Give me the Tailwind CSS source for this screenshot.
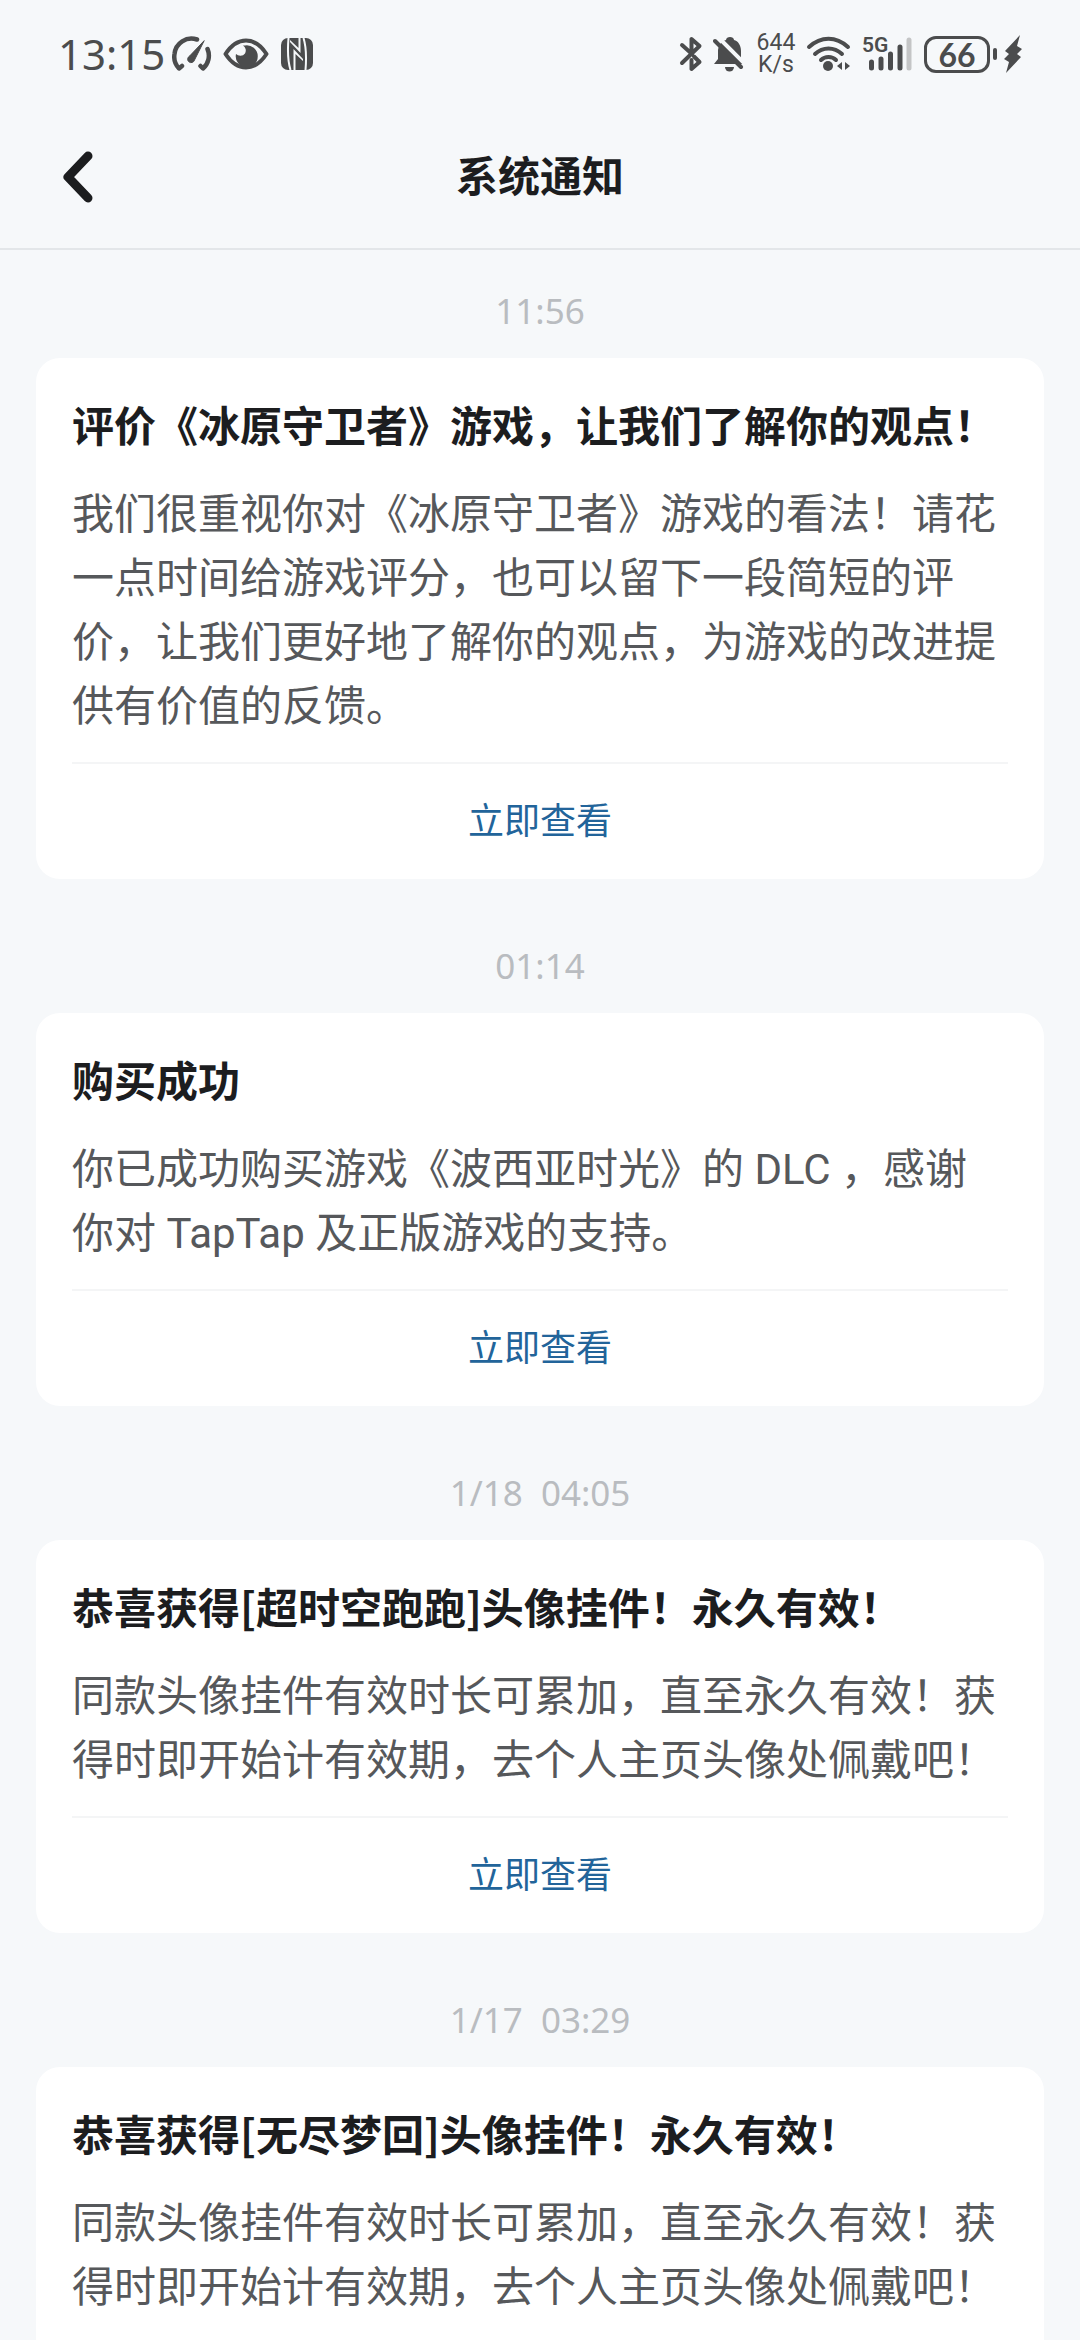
<!DOCTYPE html>
<html lang="zh-CN">
<head>
  <meta charset="UTF-8" />
  <meta name="viewport" content="width=device-width, initial-scale=1.0" />
  <title>系统通知</title>
  <script src="https://cdn.jsdelivr.net/npm/@tailwindcss/browser@4"></script>
</head>
<body class="h-screen flex flex-col bg-[#f6f8fa] text-[#1c1d1f] font-['Noto_Sans_CJK_SC',sans-serif]">

  <!-- 状态栏 -->
  <div class="h-[108px] shrink-0 flex items-center justify-between px-[58px] text-[#4b4c4d] font-['Noto_Sans',sans-serif]">
    <div class="flex items-center">
      <span class="text-[42px] leading-[44px]">13:15</span>
      <svg class="ml-[7px] w-[40px] h-[36px]" viewBox="0 0 40 36" fill="none" stroke="currentColor" stroke-width="4.5" stroke-linecap="round" stroke-linejoin="round">
        <path d="M10 30L7 32.500A17 17 0 0 1 2.500 18A17 17 0 0 1 25 3.500" />
        <path d="M35.500 13A17 17 0 0 1 31 32.500L28.500 30" />
        <path d="M32 5L22.500 24a3.500 3.500 0 1 1-5-4z" fill="currentColor" stroke-width="1" />
      </svg>
      <svg class="ml-[11px] w-[46px] h-[32px]" viewBox="0 0 46 32" fill="none" stroke="currentColor" stroke-width="4">
        <path d="M2.500 16C9 6 16 2.500 23 2.500S37 6 43.500 16C37 26 30 29.500 23 29.500S9 26 2.500 16z" stroke-linejoin="round" />
        <path d="M22 7.500a11 11 0 1 1-9 8.500 6 6 0 0 0 9-.500 6 6 0 0 0-2-8z" fill="currentColor" stroke="none" />
      </svg>
      <svg class="ml-[12px] w-[32px] h-[32px]" viewBox="0 0 32 32">
        <rect width="32" height="32" rx="7" fill="currentColor" />
        <path d="M7.500 0C6.500 12 7 24 9.500 32M24.500 32C25.500 20 25 8 22.500 0" fill="none" stroke="#f6f8fa" stroke-width="2" />
        <path d="M12.500 32V11L22 21V23L14.500 16V32zM19.500 0V15L9 4V2L17.500 10V0z" fill="#f6f8fa" />
      </svg>
    </div>

    <div class="flex items-center">
      <svg class="w-[24px] h-[36px]" viewBox="0 0 24 36" fill="none" stroke="currentColor" stroke-width="4" stroke-linejoin="round" stroke-linecap="round">
        <path d="M3 9L13 18M3 27L20.500 10L12.500 3V15M15 20.500L20.500 26L12.500 33V24" />
      </svg>
      <svg class="ml-[10px] w-[32px] h-[36px]" viewBox="0 0 32 36">
        <path d="M1 28L5 23V14C6 8 9 5 13 4C13 0 21 0 21 4C25 5 28 9 28 15V24L30 28z" fill="currentColor" />
        <path d="M12 31h9a4.500 4.500 0 0 1-9 0z" fill="currentColor" />
        <path d="M4 0L34 30" stroke="#f6f8fa" stroke-width="4" />
        <path d="M2 5L28 31" stroke="currentColor" stroke-width="4" stroke-linecap="round" />
      </svg>
      <div class="ml-[11px] w-[40px] flex flex-col items-center text-[23px] leading-[22px] font-['Roboto',sans-serif]">
        <span>644</span>
        <span>K/s</span>
      </div>
      <svg class="ml-[10px] w-[46px] h-[36px]" viewBox="0 0 46 36" fill="none" stroke="currentColor" stroke-width="4" stroke-linecap="round">
        <path d="M3 11C15 0 30 0 42 11M9 18C17 10.500 28 10.500 36 18M15 24C19 20 26 20 30 24" />
        <circle cx="22" cy="30" r="5" fill="currentColor" stroke="none" />
        <path d="M36 26v8l-5-4zM39 26v8l5-4z" fill="currentColor" stroke="none" />
      </svg>
      <div class="relative ml-[10px] w-[50px] h-[36px]">
        <span class="absolute left-0 top-0 text-[21px] leading-[18px] font-semibold font-['Roboto',sans-serif]">5G</span>
        <svg class="w-[50px] h-[36px]" viewBox="0 0 50 36" fill="none" stroke="currentColor" stroke-width="5" stroke-linecap="round">
          <path d="M9.500 26V32M19 23V32M28.500 18V32M38 11V32" />
          <path d="M47 4V32" stroke="#c4c5c6" />
        </svg>
      </div>
      <div class="ml-[12px] w-[66px] h-[37px] rounded-[12px] border-[3px] border-current flex items-center justify-center text-[32px] leading-[31px] font-bold font-['Lato',sans-serif]">66</div>
      <div class="ml-[3px] w-[4px] h-[12px] rounded-full bg-current"></div>
      <svg class="ml-[7px] w-[18px] h-[38px]" viewBox="0 0 18 38" fill="currentColor">
        <path d="M16 0L1 16L5 19L0 24L5 27L2 38L17 22L13 19L18 14L13 11z" />
      </svg>
    </div>
  </div>

  <header class="h-[142px] shrink-0 grid grid-cols-3 items-center px-[54px] pb-[4px] border-b-2 border-[#e3e6e9]">
    <button type="button" aria-label="返回" class="w-[48px] h-[60px]">
      <svg class="w-[48px] h-[60px]" viewBox="0 0 48 60" fill="none" stroke="currentColor" stroke-width="9" stroke-linecap="round" stroke-linejoin="round">
        <path d="M34 10L14 31L34 52" />
      </svg>
    </button>
    <h1 class="pb-[4px] text-center text-[42px] leading-[60px] font-bold">系统通知</h1>
  </header>

  <main class="flex-1 min-h-0 overflow-y-auto [scrollbar-width:none] px-9 pt-[37px]">
    <section class="mb-[63px]">
      <time class="block text-center text-[#b9bcc0] text-[35px] leading-[48px] font-['Noto_Sans',sans-serif]">11:56</time>
      <article class="mt-[23px] bg-white rounded-3xl px-9 pt-9">
        <h2 class="text-[42px] leading-[60px] font-bold">评价《冰原守卫者》游戏，让我们了解你的观点！</h2>
        <p class="mt-[29px] pb-[23px] text-[42px] leading-[64px] text-[#56585b] font-['Roboto','Noto_Sans_CJK_SC',sans-serif]">我们很重视你对《冰原守卫者》游戏的看法！请花一点时间给游戏评分，也可以留下一段简短的评价，让我们更好地了解你的观点，为游戏的改进提供有价值的反馈。</p>
        <a href="#" class="block border-t-2 border-[#f4f5f6] pt-[25px] pb-[31px] text-center text-[36px] leading-[59px] text-[#22649a]">立即查看</a>
      </article>
    </section>

    <section class="mb-[63px]">
      <time class="block text-center text-[#b9bcc0] text-[35px] leading-[48px] font-['Noto_Sans',sans-serif]">01:14</time>
      <article class="mt-[23px] bg-white rounded-3xl px-9 pt-9">
        <h2 class="text-[42px] leading-[60px] font-bold">购买成功</h2>
        <p class="mt-[29px] pb-[23px] text-[42px] leading-[64px] text-[#56585b] font-['Roboto','Noto_Sans_CJK_SC',sans-serif]">你已成功购买游戏《波西亚时光》的 DLC ，感谢你对 TapTap 及正版游戏的支持。</p>
        <a href="#" class="block border-t-2 border-[#f4f5f6] pt-[25px] pb-[31px] text-center text-[36px] leading-[59px] text-[#22649a]">立即查看</a>
      </article>
    </section>

    <section class="mb-[63px]">
      <time class="block text-center text-[#b9bcc0] text-[35px] leading-[48px] font-['Noto_Sans',sans-serif]">1/18&nbsp; 04:05</time>
      <article class="mt-[23px] bg-white rounded-3xl px-9 pt-9">
        <h2 class="text-[42px] leading-[60px] font-bold">恭喜获得[超时空跑跑]头像挂件！永久有效！</h2>
        <p class="mt-[29px] pb-[23px] text-[42px] leading-[64px] text-[#56585b] font-['Roboto','Noto_Sans_CJK_SC',sans-serif]">同款头像挂件有效时长可累加，直至永久有效！获得时即开始计有效期，去个人主页头像处佩戴吧！</p>
        <a href="#" class="block border-t-2 border-[#f4f5f6] pt-[25px] pb-[31px] text-center text-[36px] leading-[59px] text-[#22649a]">立即查看</a>
      </article>
    </section>

    <section class="mb-[63px]">
      <time class="block text-center text-[#b9bcc0] text-[35px] leading-[48px] font-['Noto_Sans',sans-serif]">1/17&nbsp; 03:29</time>
      <article class="mt-[23px] bg-white rounded-3xl px-9 pt-9">
        <h2 class="text-[42px] leading-[60px] font-bold">恭喜获得[无尽梦回]头像挂件！永久有效！</h2>
        <p class="mt-[29px] pb-[23px] text-[42px] leading-[64px] text-[#56585b] font-['Roboto','Noto_Sans_CJK_SC',sans-serif]">同款头像挂件有效时长可累加，直至永久有效！获得时即开始计有效期，去个人主页头像处佩戴吧！</p>
        <a href="#" class="block border-t-2 border-[#f4f5f6] pt-[25px] pb-[31px] text-center text-[36px] leading-[59px] text-[#22649a]">立即查看</a>
      </article>
    </section>
  </main>

</body>
</html>
